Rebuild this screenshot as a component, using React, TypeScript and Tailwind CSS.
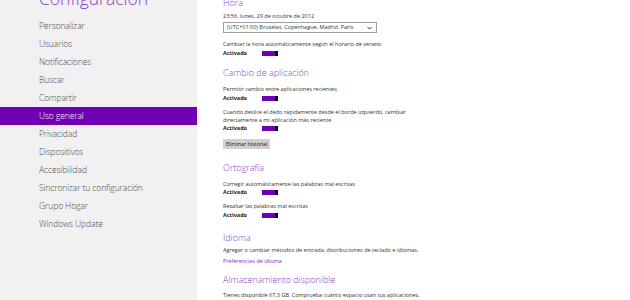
const menu = [
  "Personalizar",
  "Usuarios",
  "Notificaciones",
  "Buscar",
  "Compartir",
  "Uso general",
  "Privacidad",
  "Dispositivos",
  "Accesibilidad",
  "Sincronizar tu configuración",
  "Grupo Hogar",
  "Windows Update",
];

const Toggle = () => (
  <div className="flex h-[8px] items-center">
    <span className="w-[39px] text-[5.5px] font-bold text-[#222]">Activado</span>
    <div className="flex h-[5px] w-[16px]">
      <div className="h-full flex-1 bg-[#6f00b3]" />
      <div className="h-full w-[3px] bg-black" />
    </div>
  </div>
);

const Small = ({
  children,
  className = "",
  color = "text-[#333]",
}: {
  children: React.ReactNode;
  className?: string;
  color?: string;
}) => (
  <div className={`whitespace-nowrap text-[5.5px] leading-[8px] ${color} ${className}`}>{children}</div>
);

const Header = ({ children, className = "" }: { children: React.ReactNode; className?: string }) => (
  <div className={`text-[9px] leading-[12px] font-light text-[#8a3dc8] ${className}`}>{children}</div>
);

const App = () => {
  return (
    <main
      className="flex h-[300px] w-[630px] overflow-hidden bg-white"
      style={{ fontFamily: '"Open Sans", "Liberation Sans", sans-serif' }}
    >
      <aside className="flex h-full w-[197px] shrink-0 flex-col bg-[#f1f1f1]">
        <div className="-mt-[11px] mb-[10px] pl-[39px] text-[17.5px] leading-[18px] font-light text-[#8a3dc8]">
          Configuración
        </div>
        <nav className="flex flex-col">
          {menu.map((item) => (
            <div
              key={item}
              className={`flex h-[18px] items-center pl-[39px] text-[8.5px] font-light tracking-[-0.1px] ${
                item === "Uso general" ? "bg-[#6f00b3] text-white" : "text-[#4a4a4a]"
              }`}
            >
              {item}
            </div>
          ))}
        </nav>
      </aside>

      <section className="flex flex-col pl-[26px]">
        <Header className="-mt-[3px]">Hora</Header>
        <Small className="mt-[3px]">23:56, lunes, 29 de octubre de 2012</Small>
        <div className="mt-[2px] flex h-[11px] w-[154px] items-center justify-between border border-[#a0a0a0] bg-white pr-[4px] pl-[3px]">
          <span className="text-[5.5px] text-[#333]">(UTC+01:00) Bruselas, Copenhague, Madrid, París</span>
          <svg width="5" height="4" viewBox="0 0 5 4">
            <path d="M0.5 1 L2.5 3 L4.5 1" stroke="#333" strokeWidth="1" fill="none" />
          </svg>
        </div>
        <Small className="mt-[7px]">Cambiar la hora automáticamente según el horario de verano</Small>
        <div className="mt-[1px]"><Toggle /></div>

        <Header className="mt-[10px]">Cambio de aplicación</Header>
        <Small className="mt-[6px]">Permitir cambio entre aplicaciones recientes</Small>
        <div className="mt-[1px]"><Toggle /></div>
        <Small className="mt-[6px]">
          Cuando deslice el dedo rápidamente desde el borde izquierdo, cambiar
          <br />
          directamente a mi aplicación más reciente
        </Small>
        <Toggle />
        <div className="mt-[7px] flex h-[10px] items-center self-start whitespace-nowrap bg-[#cfcfcf] px-[3px] text-[5.5px] leading-[10px] font-medium tracking-[-0.1px] text-[#222]">
          Eliminar historial
        </div>

        <Header className="mt-[13px]">Ortografía</Header>
        <Small className="mt-[6px]">Corregir automáticamente las palabras mal escritas</Small>
        <Toggle />
        <Small className="mt-[6px]">Resaltar las palabras mal escritas</Small>
        <div className="mt-[1px]"><Toggle /></div>

        <Header className="mt-[13px]">Idioma</Header>
        <Small className="mt-[2px]">
          Agregar o cambiar métodos de entrada, distribuciones de teclado e idiomas.
        </Small>
        <Small className="mt-[3px]" color="text-[#7a2fc0]">Preferencias de idioma</Small>

        <Header className="mt-[9px]">Almacenamiento disponible</Header>
        <Small className="mt-[5px]">
          Tienes disponible 67,3 GB. Comprueba cuánto espacio usan tus aplicaciones.
        </Small>
      </section>
    </main>
  );
};

export default App;
